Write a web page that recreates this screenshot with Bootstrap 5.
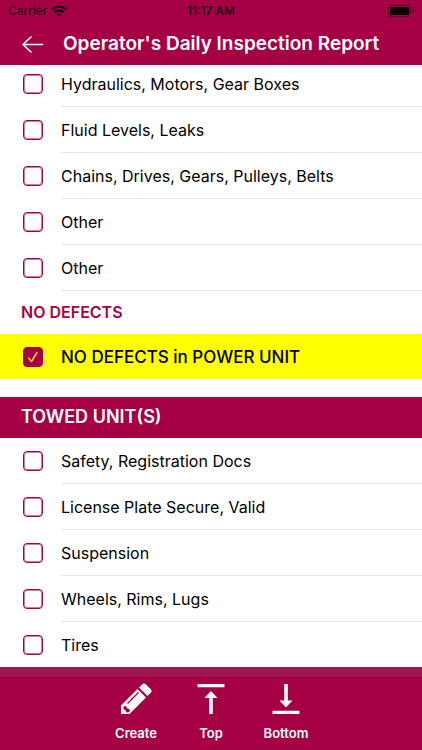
<!DOCTYPE html>
<html lang="en">
<head>
<meta charset="utf-8">
<meta name="viewport" content="width=device-width, initial-scale=1">
<title>Operator's Daily Inspection Report</title>
<link href="https://cdn.jsdelivr.net/npm/bootstrap@5.3.0/dist/css/bootstrap.min.css" rel="stylesheet">
<style>
  :root { --brand: #a50044; }
  body { font-family: Inter, "Liberation Sans", sans-serif; color: #000; }
  .brand-bg { background: var(--brand); }
  .status-row { height: 22px; padding: 0 8px; font-size: 12px; line-height: 22px; color: #14000a; }
  .status-side { flex: 1 1 0; }
  .title-row { height: 43px; padding: 0 21px; gap: 19px; }
  .title-row h1 { font-size: 19px; line-height: 24px; font-weight: 600; }
  .check-row { padding: 0 0 0 23px; gap: 18px; }
  .check-row .form-check-input { width: 20px; height: 20px; margin: 13px 0 0; border: 1px solid var(--brand); border-radius: 4px; background-color: #fff; box-shadow: inset 0 0 0 1px #d07fa1; }
  .check-row label { padding: 13px 0 12px; font-size: 16px; line-height: 20px; border-bottom: 1px solid #e6e6e8; }
  .scrolled .check-row:first-child .form-check-input { margin-top: 9px; }
  .scrolled .check-row:first-child label { padding-top: 9px; }
  .group-title { padding: 0 21px; font-size: 16px; line-height: 43px; font-weight: 600; color: var(--brand); }
  .check-row.flagged { background: #ff0; margin-bottom: 18px; }
  .flagged label { font-size: 17px; border-bottom: 0; font-weight: 500; }
  .check-row .form-check-input:checked {
    background: var(--brand) url("data:image/svg+xml,%3Csvg xmlns='http://www.w3.org/2000/svg' viewBox='0 0 20 20'%3E%3Cpath d='M5.5 11l3 3.5 5.500-9' fill='none' stroke='%23ffd83a' stroke-width='1.500' stroke-linecap='round' stroke-linejoin='round'/%3E%3C/svg%3E") center / 20px 20px no-repeat;
    box-shadow: none;
  }
  .section-bar { padding: 0 21px 2px; font-size: 18px; line-height: 39px; font-weight: 600; }
  .footer-edge { height: 10px; background: #a0174f; }
  .tool-row { height: 73px; padding-top: 6px; }
  .tool { width: 75px; padding: 0; border: 0; color: #fff; font-size: 13px; line-height: 16px; font-weight: 600; }
  .tool svg { display: block; margin: 0 auto 10px; }
</style>
<script src="https://cdn.jsdelivr.net/npm/bootstrap@5.3.0/dist/js/bootstrap.bundle.min.js" defer></script>
</head>
<body class="d-flex flex-column vh-100 overflow-hidden bg-white">
<header class="brand-bg flex-shrink-0">
  <div class="status-row d-flex align-items-center">
    <div class="status-side d-flex align-items-center gap-1">
      <span>Carrier</span>
      <svg width="16" height="12" viewBox="0 0 16 12" fill="none" stroke="#14000a" stroke-width="2.200" aria-hidden="true"><path d="M1 4.600a10 10 0 0 1 14 0M3.600 7.400a6.200 6.200 0 0 1 8.800 0"/><path d="M8 11.800L5.700 9.500a3.300 3.300 0 0 1 4.600 0z" fill="#14000a" stroke="none"/></svg>
    </div>
    <span class="fw-medium">11:17 AM</span>
    <div class="status-side d-flex justify-content-end">
      <svg width="26" height="12" viewBox="0 0 26 12" aria-hidden="true"><rect x=".5" y=".5" width="22" height="11" rx="3" fill="none" stroke="#650029"/><rect x="2" y="2" width="19" height="8" rx="1.500" fill="#000"/><path d="M24 4v4q1.500-.5 1.500-2T24 4z" fill="#650029"/></svg>
    </div>
  </div>
  <div class="title-row d-flex align-items-center">
    <a href="#" aria-label="Back"><svg class="d-block" width="23" height="20" viewBox="0 0 23 20" fill="none" stroke="#fff" stroke-width="1.500" stroke-linecap="round" stroke-linejoin="round"><path d="M21.500 10.500H2M10 3L2 10.500 10 18"/></svg></a>
    <h1 class="m-0 text-white text-nowrap">Operator's Daily Inspection Report</h1>
  </div>
</header>

<main class="flex-grow-1 overflow-hidden">
  <div class="scrolled">
    <div class="check-row d-flex"><input class="form-check-input flex-shrink-0" type="checkbox" id="p1"><label class="flex-grow-1" for="p1">Hydraulics, Motors, Gear Boxes</label></div>
    <div class="check-row d-flex"><input class="form-check-input flex-shrink-0" type="checkbox" id="p2"><label class="flex-grow-1" for="p2">Fluid Levels, Leaks</label></div>
    <div class="check-row d-flex"><input class="form-check-input flex-shrink-0" type="checkbox" id="p3"><label class="flex-grow-1" for="p3">Chains, Drives, Gears, Pulleys, Belts</label></div>
    <div class="check-row d-flex"><input class="form-check-input flex-shrink-0" type="checkbox" id="p4"><label class="flex-grow-1" for="p4">Other</label></div>
    <div class="check-row d-flex"><input class="form-check-input flex-shrink-0" type="checkbox" id="p5"><label class="flex-grow-1" for="p5">Other</label></div>
  </div>
  <h2 class="group-title m-0">NO DEFECTS</h2>
  <div class="check-row flagged d-flex"><input class="form-check-input flex-shrink-0" type="checkbox" id="nd" checked><label class="flex-grow-1" for="nd">NO DEFECTS in POWER UNIT</label></div>
  <h2 class="section-bar brand-bg text-white m-0">TOWED UNIT(S)</h2>
  <div>
    <div class="check-row d-flex"><input class="form-check-input flex-shrink-0" type="checkbox" id="t1"><label class="flex-grow-1" for="t1">Safety, Registration Docs</label></div>
    <div class="check-row d-flex"><input class="form-check-input flex-shrink-0" type="checkbox" id="t2"><label class="flex-grow-1" for="t2">License Plate Secure, Valid</label></div>
    <div class="check-row d-flex"><input class="form-check-input flex-shrink-0" type="checkbox" id="t3"><label class="flex-grow-1" for="t3">Suspension</label></div>
    <div class="check-row d-flex"><input class="form-check-input flex-shrink-0" type="checkbox" id="t4"><label class="flex-grow-1" for="t4">Wheels, Rims, Lugs</label></div>
    <div class="check-row d-flex"><input class="form-check-input flex-shrink-0" type="checkbox" id="t5"><label class="flex-grow-1" for="t5">Tires</label></div>
  </div>
</main>

<footer class="brand-bg flex-shrink-0">
  <div class="footer-edge"></div>
  <div class="tool-row d-flex justify-content-center align-items-start">
    <button type="button" class="tool bg-transparent"><svg width="32" height="32" viewBox="0 0 32 32" aria-hidden="true"><path fill="#fff" d="M1 31V22.500L17.500 6 26 14.500 9.500 31zM19 4.500L22.500 1q1.500-1.200 3 0L31 6.500q1.200 1.500 0 3L27.500 13z"/><path d="M7.500 20.500L18.500 9.500" fill="none" stroke="#a50044" stroke-width="1.300"/><path d="M3.500 23.500l2.500-.5 1 2.300 2.300.7.700 2.200-2 1.300-2-.5-.5-2-2-.5z" fill="#a50044"/></svg>Create</button>
    <button type="button" class="tool bg-transparent"><svg width="32" height="32" viewBox="0 0 32 32" aria-hidden="true"><path fill="#fff" d="M2.500 1h27v3.200h-27zM16 8l6.500 7h-4.700v16h-3.600V15H9.500z"/></svg>Top</button>
    <button type="button" class="tool bg-transparent"><svg width="32" height="32" viewBox="0 0 32 32" aria-hidden="true"><path fill="#fff" d="M2.500 27.800h27V31h-27zM16 24.500l-6.500-7h4.700V1h3.600v16.500h4.700z"/></svg>Bottom</button>
  </div>
</footer>
</body>
</html>
